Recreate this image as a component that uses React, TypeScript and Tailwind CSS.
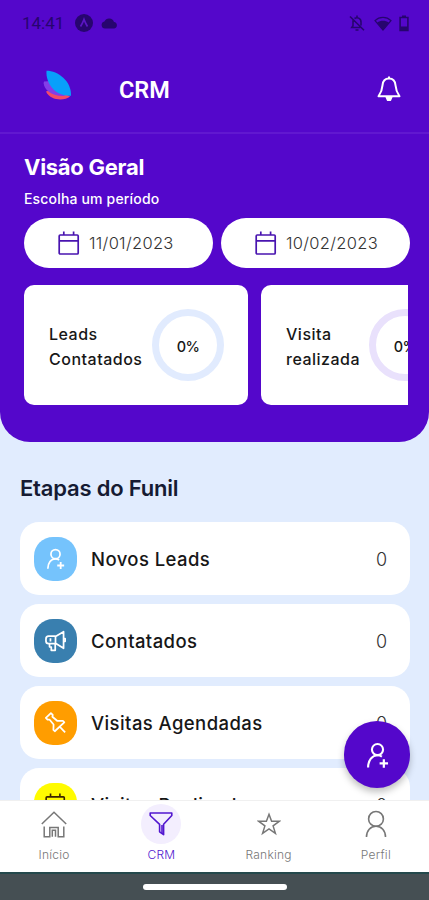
import type { ReactNode } from "react";

type IconProps = { className?: string };

function CalendarIcon({ className }: IconProps) {
  return (
    <svg viewBox="0 0 22 24" fill="none" stroke="currentColor" className={className}>
      <rect x="1.2" y="4" width="19" height="19" rx="1" strokeWidth="1.7" />
      <path d="M1.2 9.8h19M5.8 0.5v3.5M15.6 0.5v3.5" strokeWidth="1.7" />
    </svg>
  );
}

function UserPlusIcon({ className }: IconProps) {
  return (
    <svg viewBox="0 0 24 28" fill="none" stroke="currentColor" strokeWidth="2.2" className={className}>
      <circle cx="12" cy="7.8" r="5.8" />
      <path d="M2.2 26.5c0-7.5 4.3-12.8 9.8-12.8 1.8 0 3.2.5 4.6 1.5" />
      <path d="M18.6 17.9v8.8M14.2 22.3H23" strokeWidth="2.3" />
    </svg>
  );
}

function MegaphoneIcon({ className }: IconProps) {
  return (
    <svg viewBox="0 0 24 24" fill="none" stroke="currentColor" strokeWidth="1.9" strokeLinejoin="round" className={className}>
      <path d="M12 7v7.4L20.8 20V1.8L12 7ZM12 6.7H4.5C2.8 6.7 1.600 8 1.600 9.7v2.2c0 1.700 1.200 2.900 2.900 2.900H12" />
      <path d="M5.500 14.800v3.500l1.900.4v3.500h4.300v-7.400M6.500 9v3.600M21 9.300h1.500v3H21" />
    </svg>
  );
}

function PinIcon({ className }: IconProps) {
  return (
    <svg viewBox="0 0 24 24" fill="none" stroke="currentColor" strokeWidth="1.9" strokeLinejoin="round" className={className}>
      <path d="M1.500 6.500 7 1.200l2 2-.4 2 5.500 4.600h6.200l1.300 1.400L11.200 21l-1.500-1.500.2-5.800L5.400 8.200 3.300 8.400Z" />
      <path d="m16.500 16 6 6.200" />
    </svg>
  );
}

function HomeIcon() {
  return (
    <svg viewBox="0 0 26 28" fill="none" stroke="currentColor" strokeWidth="1.5" className="h-7 w-[26px]">
      <path d="M.8 14 13 2.300 25.200 14" />
      <path d="M3.200 16.500v10.300h5.600v-9.400h8.400v9.400h5.600V16.500M11.300 26.800v-6.500h3.200v6.500" />
    </svg>
  );
}

function FunnelIcon() {
  return (
    <svg viewBox="0 0 24 26" fill="none" stroke="currentColor" strokeWidth="1.6" strokeLinejoin="round" className="h-[26px] w-6">
      <path d="M1.200 2h21.600v2.500l-8.200 8.800v10.400l-4-2.900v-7.500L1.200 4.500Z" />
      <path d="M13 14v8.500" />
    </svg>
  );
}

function StarIcon() {
  return (
    <svg viewBox="0 0 24 24" fill="none" stroke="currentColor" strokeWidth="1.5" className="ml-px h-6 w-6">
      <path d="m12 2.300 2.600 7h7.600l-6.100 4.600 2.300 7.400-6.400-4.400-6.400 4.400 2.300-7.400-6.100-4.600h7.600Z" />
    </svg>
  );
}

function UserIcon() {
  return (
    <svg viewBox="0 0 22 28" fill="none" stroke="currentColor" strokeWidth="1.6" className="ml-px h-7 w-[22px]">
      <circle cx="11" cy="8.900" r="7.400" />
      <path d="M1.500 27c0-6.300 4-10.700 9.500-10.700s9.500 4.400 9.500 10.700" />
    </svg>
  );
}

function StatusBar() {
  return (
    <div className="flex h-[46px] items-center justify-between pr-5 pl-[22px] text-[#27056f]">
      <div className="flex items-center">
        <span className="w-[53px] font-[Roboto] text-[17px] leading-5">14:41</span>
        <svg viewBox="0 0 18 18" className="h-[18px] w-[18px]">
          <circle cx="9" cy="9" r="9" fill="currentColor" />
          <path d="M5.500 12.500C7 10.500 8 8 9 5.500c1 2.500 2 5 3.500 7" fill="none" stroke="#5b16c4" strokeWidth="1.800" />
        </svg>
        <svg viewBox="0 0 17 11" className="ml-2 h-[11px] w-[17px]">
          <path d="M4 10.500a3.600 3.600 0 0 1-.6-7.100A5.200 5.200 0 0 1 13 4a3.300 3.300 0 0 1 .3 6.500Z" fill="currentColor" />
        </svg>
      </div>
      <div className="flex items-center">
        <svg viewBox="0 0 16 17" fill="none" stroke="currentColor" strokeWidth="1.600" className="h-[17px] w-4">
          <path d="M4 5.200v5.600L2.800 12.500h8.400M5.500 3.500C8 1.800 12 3 12 7v3.500M8 .6v2M6.500 15h3M1 1.500l14 13.800" />
        </svg>
        <svg viewBox="0 0 18 15" className="ml-[9px] h-[15px] w-[18px]">
          <path d="M1 4.600C5.500.2 12.500.2 17 4.600L9 14Z" fill="none" stroke="currentColor" strokeWidth="1.300" />
          <path d="M3.200 6.600c3.400-2.500 8.200-2.500 11.600 0L9 14Z" fill="currentColor" />
        </svg>
        <svg viewBox="0 0 10 17" className="ml-[7px] h-[17px] w-[10px]">
          <path d="M1.100 2.500h7.800v13H1.100Z" fill="none" stroke="currentColor" strokeWidth="1.600" />
          <path d="M3 .5h4v2H3ZM1 11.500h8v4H1Z" fill="currentColor" />
        </svg>
      </div>
    </div>
  );
}

function Header() {
  return (
    <div className="flex h-[88px] items-center border-b-2 border-[#6118d0] pr-[28px] pl-[43px]">
      <svg viewBox="0 0 29 30" className="-mt-2 h-[30px] w-[29px]">
        <path d="M3 21.500C7 30.500 21 31.500 27 26.500L14 18Z" fill="#f34b68" />
        <path d="M1 11.500C-1 17 7 27 22 26L8 11Z" fill="#843de8" />
        <path d="M3.500.8C15 .8 28.500 11 28 25.700 14 27 2.500 15 3.500.8Z" fill="#08a0fb" />
      </svg>
      <h1 className="mt-px ml-[47px] flex-1 font-[Roboto] text-[23.5px] leading-7 font-semibold">CRM</h1>
      <svg viewBox="0 0 24 26" fill="none" stroke="currentColor" strokeWidth="2" strokeLinejoin="round" className="h-[26px] w-6">
        <path d="M12 2.500c-4.500 0-6.200 3-6.500 6.800C5.200 14 4.500 16 1.500 20.300h21C19.500 16 18.800 14 18.500 9.300 18.200 5.500 16.500 2.500 12 2.500Z" />
        <path d="M9.500 21h5l-1.300 3h-2.400ZM11 1.500h2" fill="currentColor" />
      </svg>
    </div>
  );
}

function DateButton({ date }: { date: string }) {
  return (
    <button className="flex h-[50px] items-center justify-center gap-[9px] rounded-full bg-white pr-[2px] text-[#4914b0]">
      <CalendarIcon className="h-6 w-[22px]" />
      <span className="w-[88px] text-left text-[16.5px] font-light tracking-[0.3px] whitespace-nowrap text-[#333]">{date}</span>
    </button>
  );
}

function MetricCard({ lines, ring, width }: { lines: [string, string]; ring: string; width: string }) {
  return (
    <div className={`flex h-[120px] shrink-0 items-center rounded-[10px] bg-white pl-[25px] ${width}`}>
      <p className="mt-[3px] flex-1 text-[16px] leading-[25px] font-medium tracking-[0.5px] text-[#171717]">
        {lines[0]}
        <br />
        {lines[1]}
      </p>
      <div className={`flex h-[72px] w-[72px] items-center justify-center rounded-full border-[7px] pt-[3px] text-[14.5px] font-medium tracking-[-0.6px] text-[#171717] ${ring}`}>
        0%
      </div>
    </div>
  );
}

function StageRow({ label, color, icon }: { label: string; color: string; icon: ReactNode }) {
  return (
    <div className="flex h-[73px] shrink-0 items-center rounded-[19px] bg-white pr-[23px] pl-[14px]">
      <div className={`flex h-[44px] w-[43px] items-center justify-center rounded-[19px] ${color}`}>{icon}</div>
      <span className="mt-[2px] ml-[14px] flex-1 text-[18.5px] font-medium tracking-[0.42px] text-[#171717]">{label}</span>
      <span className="mt-[2px] text-[18px] font-light text-[#333]">0</span>
    </div>
  );
}

function Tab({ label, active, children }: { label: string; active?: boolean; children: ReactNode }) {
  return (
    <div className={`flex flex-col items-center pt-[3px] pl-px text-[12px] ${active ? "text-[#5217cf]" : "text-[#777]"}`}>
      <div className={`flex h-10 w-10 items-center justify-center rounded-full ${active ? "bg-[#f3eefe]" : ""}`}>
        {children}
      </div>
      <span className="mt-[3px] leading-4 font-light tracking-[0.25px]">{label}</span>
    </div>
  );
}

export default function App() {
  return (
    <div className="relative flex h-[900px] w-[429px] flex-col overflow-hidden bg-[#e1ecfe] font-[Inter,sans-serif]">
      <section className="h-[442px] shrink-0 rounded-b-[30px] bg-[#5407cb] text-white">
        <StatusBar />
        <Header />
        <div className="px-[24px] pt-[19px]">
          <h2 className="text-[22px] leading-7 font-bold tracking-[-0.28px]">Visão Geral</h2>
          <p className="mt-[8px] text-[14px] leading-5 font-medium tracking-[0.17px]">Escolha um período</p>
          <div className="-mr-[5px] mt-[9px] grid grid-cols-2 gap-2">
            <DateButton date="11/01/2023" />
            <DateButton date="10/02/2023" />
          </div>
          <div className="-mr-[3px] mt-[17px] flex gap-[13px] overflow-hidden">
            <MetricCard lines={["Leads", "Contatados"]} ring="border-[#e1ebfe]" width="w-[224px] pr-[24px]" />
            <MetricCard lines={["Visita", "realizada"]} ring="border-[#e9e1fc]" width="w-[204px] pr-[24px]" />
          </div>
        </div>
      </section>

      <section className="flex min-h-0 flex-1 flex-col overflow-hidden pr-[19px] pl-[20px]">
        <h2 className="mt-[32px] mb-[20px] text-[22px] leading-7 font-semibold tracking-[-0.2px] text-[#151b33]">
          Etapas do Funil
        </h2>
        <div className="flex flex-col gap-[9px]">
          <StageRow label="Novos Leads" color="bg-[#75c3fc]" icon={<UserPlusIcon className="h-[22px] w-[19px] text-white" />} />
          <StageRow label="Contatados" color="bg-[#397faf]" icon={<MegaphoneIcon className="h-[22px] w-[23px] text-white" />} />
          <StageRow label="Visitas Agendadas" color="bg-[#ff9d00]" icon={<PinIcon className="h-[22px] w-[23px] text-white" />} />
          <StageRow label="Visitas Realizadas" color="bg-[#fffb00]" icon={<CalendarIcon className="h-[23px] w-[21px] text-[#3b2500]" />} />
        </div>
      </section>

      <button className="absolute top-[721px] left-[344px] flex h-[67px] w-[66px] items-center justify-center rounded-full bg-[#5407cb] pt-px text-white shadow-[0_4px_7px_rgba(0,0,0,0.25)]">
        <UserPlusIcon className="h-[27px] w-[23px]" />
      </button>

      <nav className="z-10 grid h-[72px] shrink-0 grid-cols-4 border-t border-[#f0f0f0] bg-white">
        <Tab label="Início"><HomeIcon /></Tab>
        <Tab label="CRM" active><FunnelIcon /></Tab>
        <Tab label="Ranking"><StarIcon /></Tab>
        <Tab label="Perfil"><UserIcon /></Tab>
      </nav>
      <div className="flex h-7 shrink-0 items-center justify-center border-t-2 border-[#24494c] bg-[#454f53]">
        <div className="h-[6px] w-[144px] rounded-full bg-white" />
      </div>
    </div>
  );
}
